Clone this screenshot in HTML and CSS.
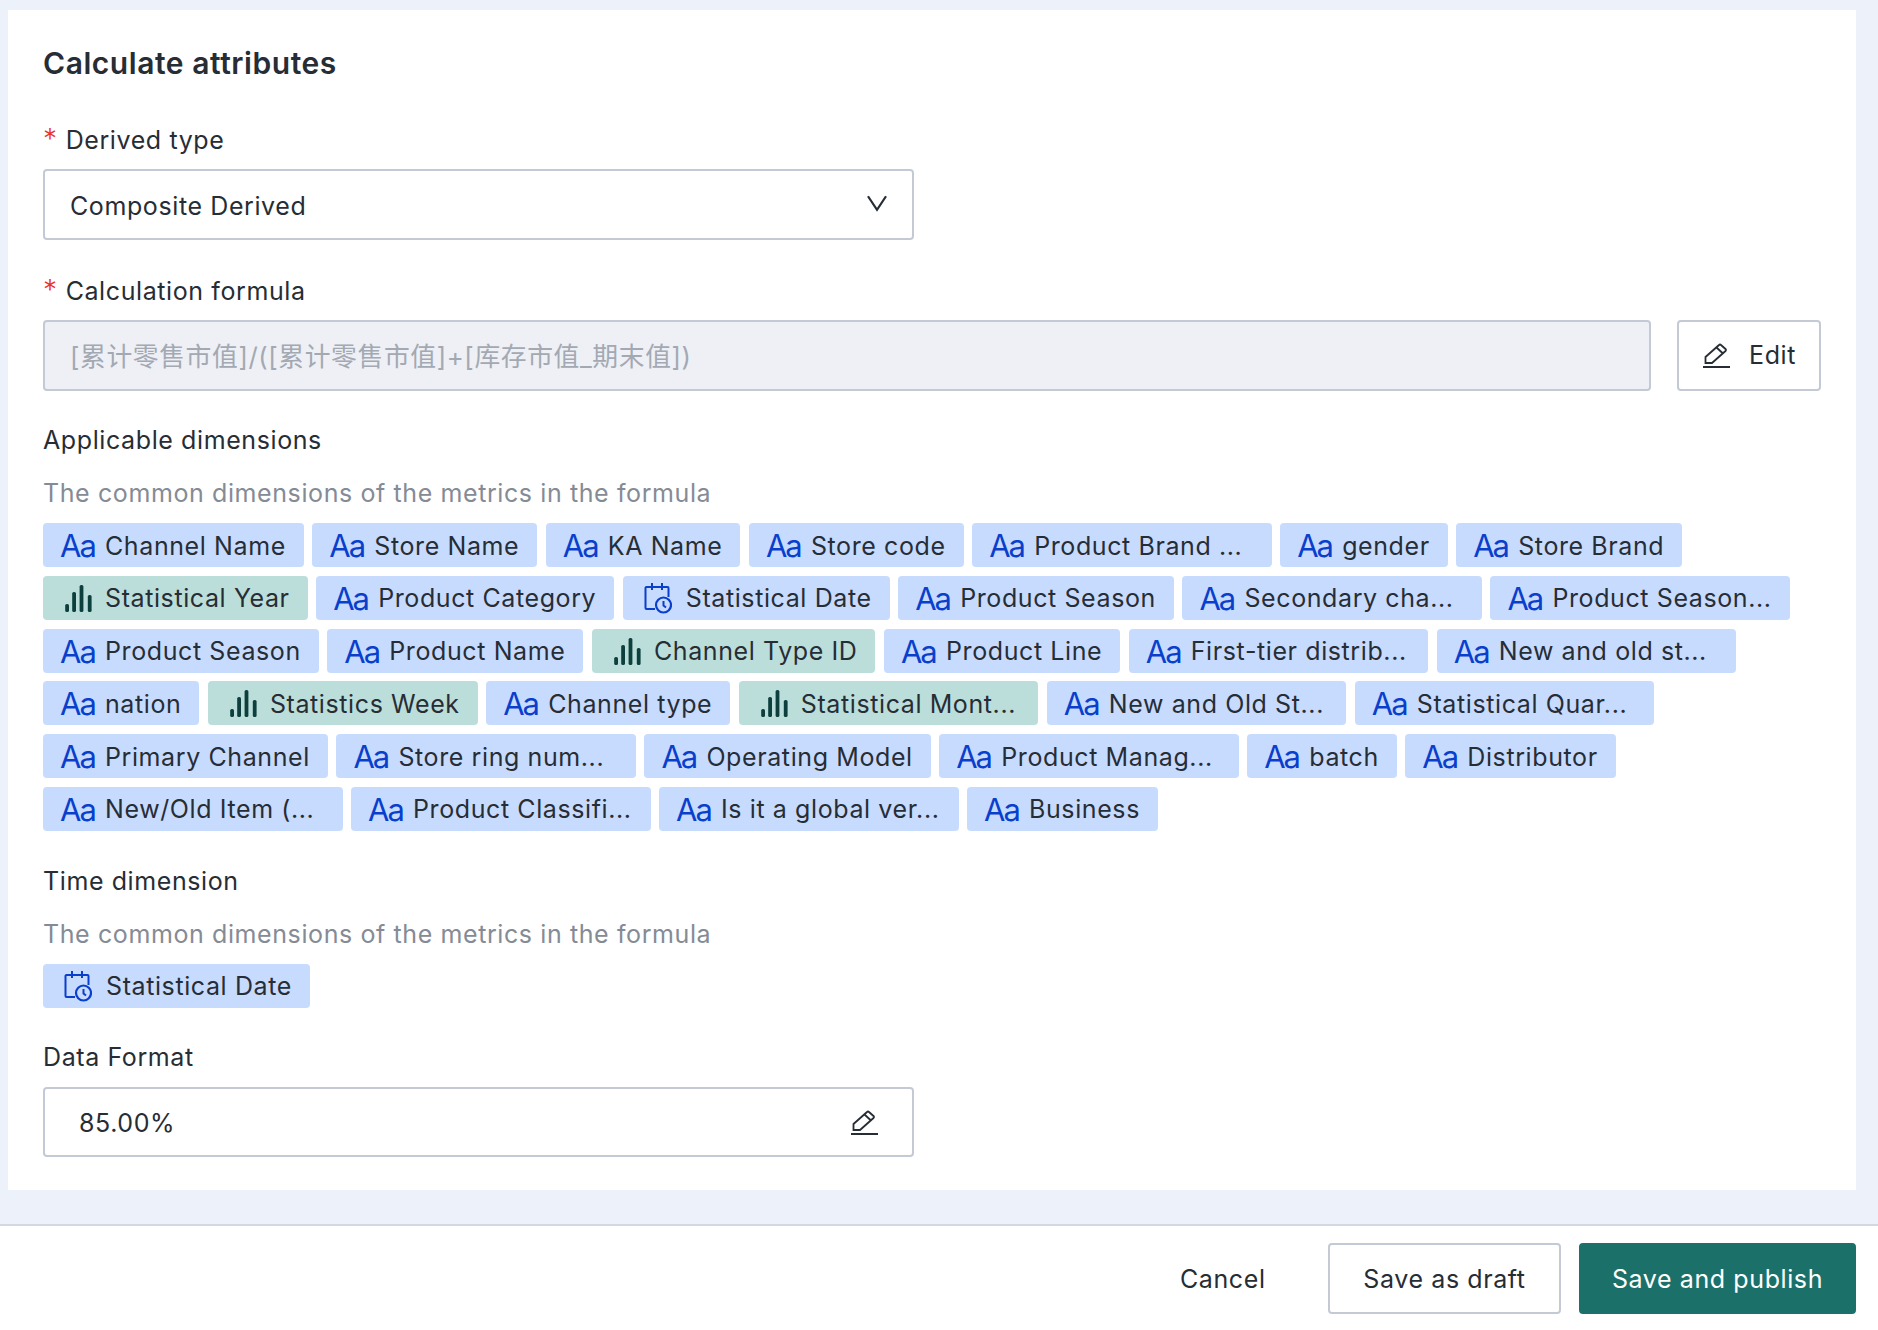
FILE: index.html
```html
<!DOCTYPE html>
<html lang="en">
<head>
    <meta charset="UTF-8">
    <meta name="viewport" content="width=device-width, initial-scale=1.0">
    <title>Calculate attributes</title>
    <link rel="stylesheet" href="styles.css">
</head>
<body>

    <!-- Icons used by the tags and inputs -->
    <svg class="icon-defs" aria-hidden="true">
        <symbol id="bars" viewBox="0 0 27 27">
            <rect x="0.2" y="19" width="3.8" height="8" rx="1.6"/>
            <rect x="7.2" y="7" width="3.8" height="20" rx="1.6"/>
            <rect x="14.6" y="0" width="3.8" height="27" rx="1.6"/>
            <rect x="22.8" y="10" width="3.8" height="17" rx="1.6"/>
        </symbol>
        <symbol id="calendar" viewBox="0 0 28 32">
            <path d="M11 27H2.5a1 1 0 0 1-1-1V6a1 1 0 0 1 1-1h21a1 1 0 0 1 1 1v9" fill="none" stroke="currentColor" stroke-width="2"/>
            <path d="M8 1v7M18 1v7" fill="none" stroke="currentColor" stroke-width="2"/>
            <circle cx="19.5" cy="23" r="7.5" fill="none" stroke="currentColor" stroke-width="2.2"/>
            <path d="M19.5 19v4.5l2.5 2" fill="none" stroke="currentColor" stroke-width="2"/>
        </symbol>
        <symbol id="pencil" viewBox="0 0 27 25">
            <path d="M2.5 20v-6L16 2q1-1 2 0l4.5 4q1 1 0 2L9 20Z" fill="none" stroke="currentColor" stroke-width="1.8"/>
            <path d="M13.5 4.5l6.5 6" fill="none" stroke="currentColor" stroke-width="1.8"/>
            <path d="M0 24H27" fill="none" stroke="currentColor" stroke-width="2"/>
        </symbol>
    </svg>

    <div class="page">
        <main class="card">
            <h2 class="card-title">Calculate attributes</h2>

            <div class="field-label"><span class="required">*</span>Derived type</div>
            <div class="input input-half select-box">
                <span>Composite Derived</span>
                <svg class="chevron" viewBox="0 0 20 16"><path d="M2 2l8 12 8-12" fill="none" stroke="currentColor" stroke-width="2"/></svg>
            </div>

            <div class="field-label field-gap"><span class="required">*</span>Calculation formula</div>
            <div class="formula-row">
                <div class="input input-disabled">[累计零售市值]/([累计零售市值]+[库存市值_期末值])</div>
                <button class="btn btn-edit"><svg class="pencil"><use href="#pencil"/></svg>Edit</button>
            </div>

            <div class="field-label section-gap">Applicable dimensions</div>
            <div class="hint">The common dimensions of the metrics in the formula</div>
            <div class="tag-list">
                <span class="tag"><span class="aa">Aa</span>Channel Name</span>
                <span class="tag"><span class="aa">Aa</span>Store Name</span>
                <span class="tag"><span class="aa">Aa</span>KA Name</span>
                <span class="tag"><span class="aa">Aa</span>Store code</span>
                <span class="tag tag-cut"><span class="aa">Aa</span>Product Brand ...</span>
                <span class="tag"><span class="aa">Aa</span>gender</span>
                <span class="tag"><span class="aa">Aa</span>Store Brand</span>
                <span class="tag tag-metric"><svg class="bars"><use href="#bars"/></svg>Statistical Year</span>
                <span class="tag"><span class="aa">Aa</span>Product Category</span>
                <span class="tag"><svg class="calendar"><use href="#calendar"/></svg>Statistical Date</span>
                <span class="tag"><span class="aa">Aa</span>Product Season</span>
                <span class="tag tag-cut"><span class="aa">Aa</span>Secondary cha...</span>
                <span class="tag tag-cut"><span class="aa">Aa</span>Product Season...</span>
                <span class="tag"><span class="aa">Aa</span>Product Season</span>
                <span class="tag"><span class="aa">Aa</span>Product Name</span>
                <span class="tag tag-metric"><svg class="bars"><use href="#bars"/></svg>Channel Type ID</span>
                <span class="tag"><span class="aa">Aa</span>Product Line</span>
                <span class="tag tag-cut"><span class="aa">Aa</span>First-tier distrib...</span>
                <span class="tag tag-cut"><span class="aa">Aa</span>New and old st...</span>
                <span class="tag"><span class="aa">Aa</span>nation</span>
                <span class="tag tag-metric"><svg class="bars"><use href="#bars"/></svg>Statistics Week</span>
                <span class="tag"><span class="aa">Aa</span>Channel type</span>
                <span class="tag tag-metric tag-cut"><svg class="bars"><use href="#bars"/></svg>Statistical Mont...</span>
                <span class="tag tag-cut"><span class="aa">Aa</span>New and Old St...</span>
                <span class="tag tag-cut"><span class="aa">Aa</span>Statistical Quar...</span>
                <span class="tag"><span class="aa">Aa</span>Primary Channel</span>
                <span class="tag tag-cut"><span class="aa">Aa</span>Store ring num...</span>
                <span class="tag"><span class="aa">Aa</span>Operating Model</span>
                <span class="tag tag-cut"><span class="aa">Aa</span>Product Manag...</span>
                <span class="tag"><span class="aa">Aa</span>batch</span>
                <span class="tag"><span class="aa">Aa</span>Distributor</span>
                <span class="tag tag-cut"><span class="aa">Aa</span>New/Old Item (...</span>
                <span class="tag tag-cut"><span class="aa">Aa</span>Product Classifi...</span>
                <span class="tag tag-cut"><span class="aa">Aa</span>Is it a global ver...</span>
                <span class="tag"><span class="aa">Aa</span>Business</span>
            </div>

            <div class="field-label field-gap">Time dimension</div>
            <div class="hint">The common dimensions of the metrics in the formula</div>
            <div class="tag-list">
                <span class="tag"><svg class="calendar"><use href="#calendar"/></svg>Statistical Date</span>
            </div>

            <div class="field-label format-label">Data Format</div>
            <div class="input input-half format-box">
                <span>85.00%</span>
                <svg class="pencil"><use href="#pencil"/></svg>
            </div>
        </main>

        <footer class="footer">
            <button class="btn btn-plain">Cancel</button>
            <button class="btn btn-draft">Save as draft</button>
            <button class="btn btn-primary">Save and publish</button>
        </footer>
    </div>

</body>
</html>
```

FILE: styles.css
```css
* {
    box-sizing: border-box;
}

body {
    margin: 0;
    background-color: #edf1f9;
    color: #272d35;
    font-family: Inter, "Noto Sans CJK SC", sans-serif;
    font-size: 25px;
    letter-spacing: 0.6px;
}

.icon-defs {
    display: none;
}

.page {
    height: 1330px;
    display: flex;
    flex-direction: column;
}

.card {
    height: 1180px;
    margin: 10px 22px 0 8px;
    padding: 30px 35px 0;
    background-color: #fff;
}

.card-title {
    margin: 0 0 37px;
    font-size: 30px;
    line-height: 46px;
    font-weight: 600;
    letter-spacing: 0.55px;
}

.field-label {
    line-height: 32px;
    margin-bottom: 13px;
}

.field-gap {
    margin-top: 34px;
}

.section-gap {
    margin-top: 33px;
}

.format-label {
    margin-top: 33px;
    margin-bottom: 14px;
}

.required {
    color: #e8332a;
    margin-right: 8px;
    font-size: 28px;
    font-weight: 300;
}

.input {
    height: 71px;
    display: flex;
    align-items: center;
    padding: 2px 25px 0;
    border: 2px solid #c3cad5;
    border-radius: 4px;
}

.input-half {
    width: 871px;
}

.select-box {
    justify-content: space-between;
}

.chevron {
    width: 24px;
    height: 18px;
    margin-right: -2px;
    margin-top: -6px;
}

.formula-row {
    display: flex;
    gap: 26px;
}

.input-disabled {
    flex: 1;
    padding: 0 25px 3px;
    background-color: #eef0f5;
    color: #a3a9b3;
    font-size: 25.8px;
}

.btn {
    font-family: inherit;
    font-size: 25px;
    letter-spacing: inherit;
    color: inherit;
    border: 2px solid #c3cad5;
    border-radius: 4px;
    background-color: #fff;
    height: 71px;
    padding: 2px 0 0;
}

.btn-edit {
    width: 144px;
    flex-shrink: 0;
    display: flex;
    align-items: center;
    justify-content: center;
    gap: 19px;
    padding: 0 0 1px 1px;
}

.pencil {
    width: 27px;
    height: 25px;
    color: #272d35;
}

.hint {
    color: #858b95;
    line-height: 32px;
    margin-top: 21px;
    margin-bottom: 14px;
}

.tag-list {
    display: flex;
    flex-wrap: wrap;
    gap: 8.8px 8.5px;
}

.tag {
    height: 44px;
    display: flex;
    align-items: center;
    padding: 1px 18px 0;
    background-color: #c7dbff;
    border-radius: 4px;
    white-space: nowrap;
}

/* truncated names keep the same width */
.tag-cut {
    width: 299.5px;
}

.tag-metric {
    background-color: #bcdeda;
}

.aa {
    width: 34px;
    margin: 0 11px 0 -1px;
    color: #0a3fcc;
    font-size: 31px;
    font-weight: 400;
    letter-spacing: -2px;
}

.bars {
    width: 27px;
    height: 27px;
    margin: 0 13px 0 4px;
    fill: #0c3f3d;
}

.calendar {
    width: 28px;
    height: 32px;
    margin: 0 14px 0 3px;
    color: #0a3fcc;
}

.format-box {
    justify-content: space-between;
    padding: 2px 34px 0 34px;
    height: 70px;
}

.footer {
    flex: 1;
    margin-top: 34px;
    background-color: #fff;
    border-top: 2px solid #d3d9e2;
    display: flex;
    align-items: center;
    justify-content: flex-end;
    padding-right: 22px;
}

.btn-plain {
    border: none;
    width: 85px;
    margin-right: 63px;
}

.btn-draft {
    width: 233px;
    margin-right: 18px;
}

.btn-primary {
    width: 277px;
    background-color: #1b716a;
    border-color: #1b716a;
    color: #fff;
}
```
